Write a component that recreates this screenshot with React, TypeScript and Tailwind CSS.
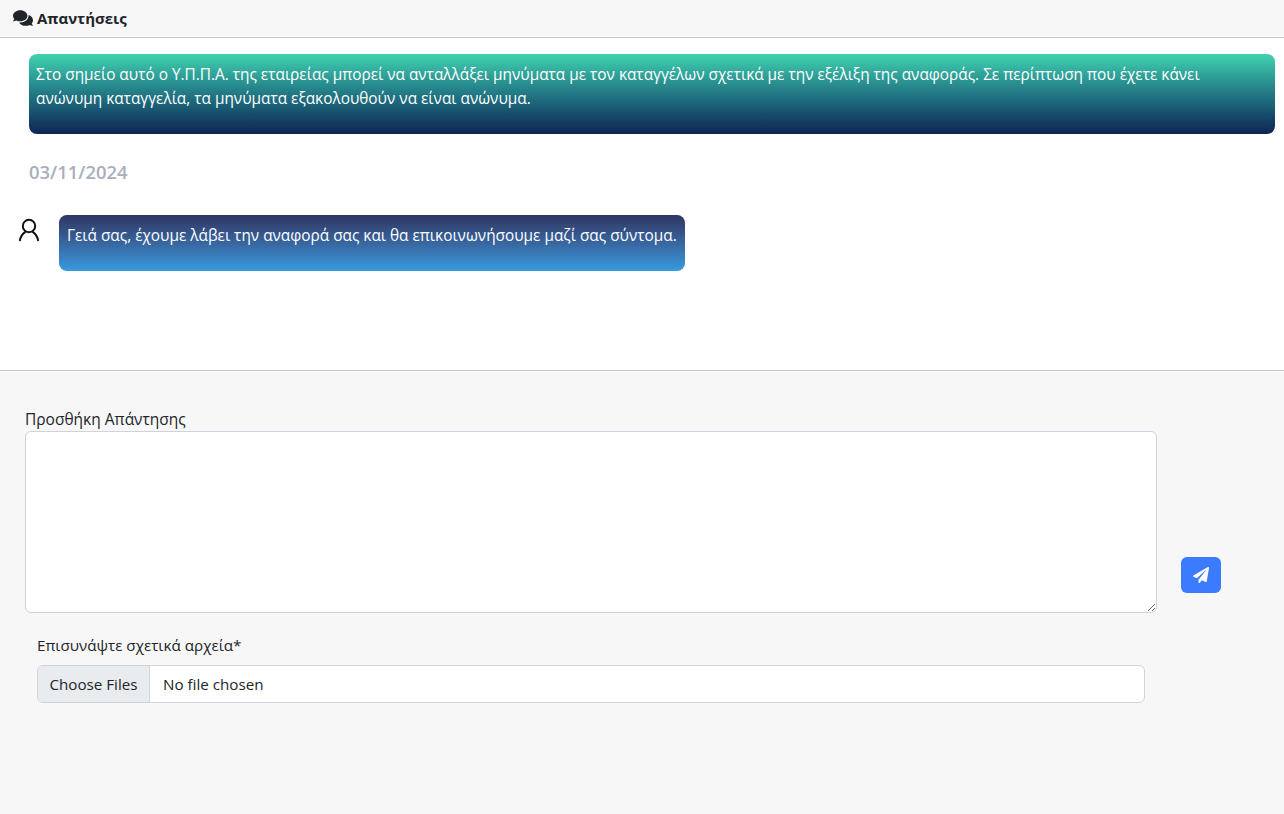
import React from "react";
import { FaComments, FaPaperPlane } from "react-icons/fa";

const font = "font-['Open_Sans','Noto_Sans',sans-serif]";

const PersonIcon = () => (
  <svg viewBox="0 0 24 26" className="mt-[2px] ml-[1px] h-[26px] w-[24px] shrink-0" fill="none" stroke="#111111" strokeWidth="2">
    <circle cx="12" cy="9" r="6.2" />
    <path d="M2.8 24 C3.4 19.6 5.6 16.6 8.6 14.6" />
    <path d="M21.2 24 C20.6 19.6 18.4 16.6 15.4 14.6" />
  </svg>
);

export default function App() {
  return (
    <div className={`${font} flex h-[814px] flex-col bg-white text-[#212529]`}>
      {/* Header */}
      <div className="flex h-[38px] shrink-0 items-center gap-[4px] border-b border-[#cccccc] bg-[#f7f7f7] pl-[13px] pb-px">
        <FaComments className="text-[20px] text-[#212529]" />
        <span className="text-[15px] font-bold">Απαντήσεις</span>
      </div>

      {/* Messages */}
      <div className="h-[333px] shrink-0 border-b border-[#cccccc] pt-[16px] pl-[29px] pr-[9px]">
        <div className="h-[80px] rounded-[8px] bg-gradient-to-b from-[#40d3b0] to-[#0f2454] py-[9px] pl-[7px] pr-[40px] text-[15.38px] leading-[24px] text-white">
          Στο σημείο αυτό ο Υ.Π.Π.Α. της εταιρείας μπορεί να ανταλλάξει μηνύματα με τον καταγγέλων σχετικά με την εξέλιξη της αναφοράς. Σε περίπτωση που έχετε κάνει ανώνυμη καταγγελία, τα μηνύματα εξακολουθούν να είναι ανώνυμα.
        </div>
        <div className="mt-[25px] text-[18.4px] leading-[26px] font-semibold text-[#a9aebd]">03/11/2024</div>
        <div className="mt-[30px] -ml-[13px] flex items-start">
          <PersonIcon />
          <div className="ml-[18px] h-[56px] rounded-[8px] bg-gradient-to-b from-[#2e3663] to-[#379ae0] px-[8px] py-[9px] text-[15.38px] leading-[24px] text-white">
            Γειά σας, έχουμε λάβει την αναφορά σας και θα επικοινωνήσουμε μαζί σας σύντομα.
          </div>
        </div>
      </div>

      {/* Reply form */}
      <div className="flex-1 bg-[#f7f7f7] pt-[38px] pl-[25px] text-[15.2px]">
        <div className="text-[15.5px] leading-[21px]">Προσθήκη Απάντησης</div>
        <div className="mt-px flex items-end">
          <textarea className="block h-[182px] w-[1132px] rounded-[6px] border border-[#ced4da] bg-white" />
          <button className="mb-[20px] ml-[24px] flex h-[36px] w-[40px] items-center justify-center rounded-[6px] bg-[#3a7bff] text-white">
            <FaPaperPlane className="text-[16px]" />
          </button>
        </div>
        <div className="mt-[22px] ml-[12px] w-[1108px]">
          <div className="mb-[9px] leading-[21px]">Επισυνάψτε σχετικά αρχεία*</div>
          <div className="flex h-[38px] items-center overflow-hidden rounded-[6px] border border-[#ced4da] bg-white">
            <div className="flex h-full w-[112px] items-center justify-center border-r border-[#ced4da] bg-[#e9ecef]">Choose Files</div>
            <div className="pl-[13px]">No file chosen</div>
          </div>
        </div>
      </div>
    </div>
  );
}
